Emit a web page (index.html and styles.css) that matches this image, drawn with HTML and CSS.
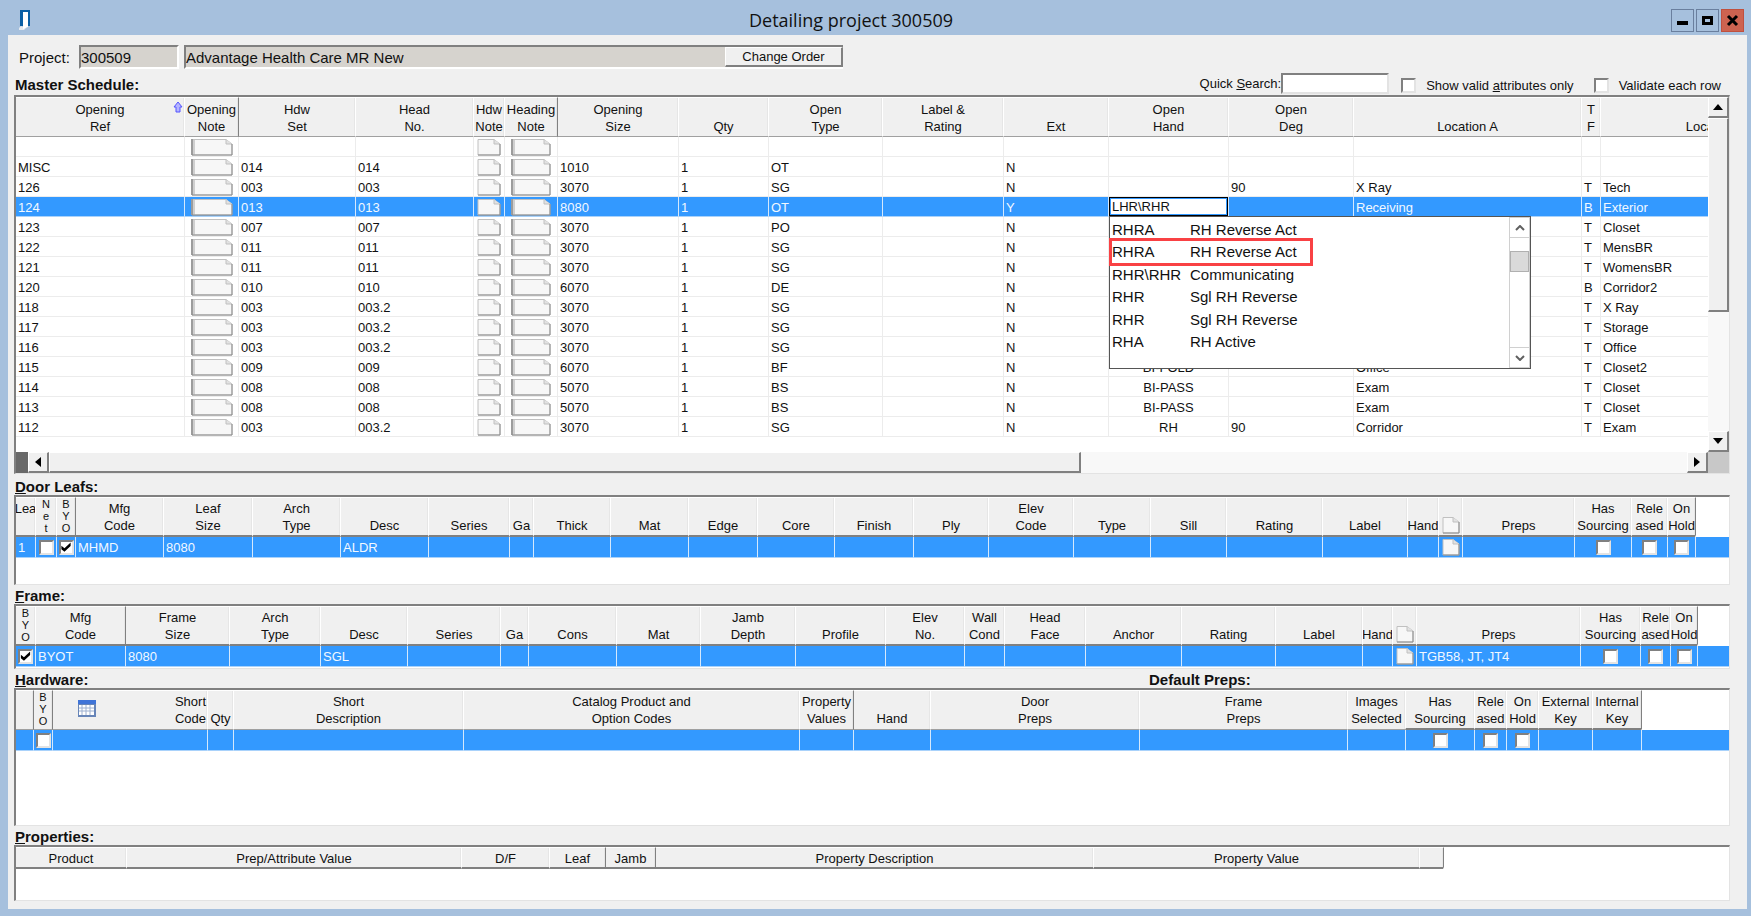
FILE: index.html
```html
<!DOCTYPE html>
<html lang="en">
<head>
  <meta charset="UTF-8">
  <title>Detailing project 300509</title>
  <link rel="stylesheet" href="styles.css">
</head>
<body>
  <header class="titlebar">
    <svg class="app-icon" width="12" height="20" viewBox="0 0 12 20">
      <path d="M2 16 L7 18 L5 20 L0 20 L0 18 Z" fill="#e4e9ef"/>
      <rect x="1" y="0" width="10" height="16" fill="#0a5fa5"/>
      <path d="M4 2 H9 V17 L4 19 Z" fill="#ffffff"/>
    </svg>
    <h1>Detailing project 300509</h1>
    <div class="window-buttons">
      <button type="button" aria-label="Minimize"><svg width="13" height="13" viewBox="0 0 13 13"><rect x="1" y="7" width="11" height="4"/></svg></button>
      <button type="button" aria-label="Maximize"><svg width="13" height="13" viewBox="0 0 13 13"><path d="M1 2 H12 V11 H1 Z M4 5 V8 H9 V5 Z" fill-rule="evenodd"/></svg></button>
      <button type="button" class="close" aria-label="Close"><svg width="13" height="13" viewBox="0 0 13 13"><path d="M2 2 L11 11 M11 2 L2 11" stroke="#000" stroke-width="3"/></svg></button>
    </div>
  </header>

  <main class="content">
    <div class="project-row">
      <label for="project-no">Project:</label>
      <input type="text" class="field project-no" id="project-no" value="300509" readonly>
      <div class="field project-name">
        <input type="text" value="Advantage Health Care MR New" aria-label="Project name" readonly>
        <button type="button" class="raised">Change Order</button>
      </div>
    </div>

    <div class="schedule-head">
      <h2>Master Schedule:</h2>
      <div class="search">
        <label for="quick-search">Quick <u>S</u>earch:</label>
        <input type="text" id="quick-search">
      </div>
      <label class="option"><input type="checkbox"> <span>Show valid <u>a</u>ttributes only</span></label>
      <label class="option"><input type="checkbox"> <span>Validate each row</span></label>
    </div>

    <section class="box master">
      <div class="pane"><table id="master"></table></div>
      <div class="vscroll">
        <button type="button" class="raised" aria-label="Scroll up"><svg width="10" height="6" viewBox="0 0 10 6"><path d="M5 0 L10 6 H0 Z"/></svg></button>
        <div class="track"><div class="thumb raised"></div></div>
        <button type="button" class="raised" aria-label="Scroll down"><svg width="10" height="6" viewBox="0 0 10 6"><path d="M0 0 H10 L5 6 Z"/></svg></button>
      </div>
      <div class="hscroll">
        <div class="split-box"></div>
        <button type="button" class="raised" aria-label="Scroll left"><svg width="6" height="10" viewBox="0 0 6 10"><path d="M6 0 V10 L0 5 Z"/></svg></button>
        <div class="track"><div class="thumb raised"></div></div>
        <button type="button" class="raised" aria-label="Scroll right"><svg width="6" height="10" viewBox="0 0 6 10"><path d="M0 0 V10 L6 5 Z"/></svg></button>
      </div>
      <div class="corner"></div>
    </section>

    <h2 class="leafs-title"><u>D</u>oor Leafs:</h2>
    <section class="box leafs"><table id="leafs" class="thick"></table></section>

    <h2><u>F</u>rame:</h2>
    <section class="box frame"><table id="frame" class="thick"></table></section>

    <div class="hardware-head">
      <h2><u>H</u>ardware:</h2>
      <h2>Default Preps:</h2>
    </div>
    <section class="box hardware"><table id="hardware"></table></section>

    <h2><u>P</u>roperties:</h2>
    <section class="box properties"><table id="properties" class="thick short"></table></section>
  </main>
  <script src="grids.js"></script>
</body>
</html>
```
FILE: styles.css
```css
*, *::before, *::after {
  box-sizing: border-box;
}
body {
  margin: 0;
  min-height: 100vh;
  display: flex;
  flex-direction: column;
  background: #a6c0dd;
  color: #111;
  font-family: "Liberation Sans", Arial, sans-serif;
  font-size: 13px;
  line-height: 17px;
}
button, input {
  font: inherit;
  color: inherit;
  margin: 0;
  padding: 0;
  border-radius: 0;
}
h1, h2 {
  margin: 0;
}

/* title bar */
.titlebar {
  display: flex;
  align-items: center;
  height: 35px;
  padding: 5px 7px 0 19px;
}
.titlebar h1 {
  flex: 1;
  text-align: center;
  font-family: "Open Sans", "Noto Sans", sans-serif;
  font-size: 18px;
  font-weight: 400;
  line-height: 24px;
}
.window-buttons {
  display: flex;
  gap: 2px;
}
.window-buttons button {
  display: flex;
  align-items: center;
  justify-content: center;
  width: 23px;
  height: 23px;
  background: #a6c0dd;
  border: 1px solid #6a7f9e;
}
.window-buttons .close {
  background: #cd6350;
  border-color: #c0503e;
}

.content {
  flex: 1;
  display: flex;
  flex-direction: column;
  margin: 0 4px 7px 8px;
  padding: 10px 17px 8px 6px;
  background: #f0f0f0;
}
h2 {
  padding: 2px 0 0 1px;
  font-size: 15px;
  font-weight: bold;
  line-height: 17px;
}

/* project line */
.project-row {
  display: flex;
  align-items: center;
  height: 24px;
  font-size: 15px;
}
.project-row label {
  width: 65px;
  padding-left: 5px;
}
.field {
  height: 24px;
  background: #d6d3ce;
  border: 2px solid #808080;
  border-right-color: #fff;
  border-bottom-color: #fff;
}
.project-no {
  width: 100px;
  margin-right: 5px;
}
.project-name {
  display: flex;
  width: 659px;
  border-right: 0;
}
.project-name input {
  flex: 1;
  min-width: 0;
  border: 0;
  background: transparent;
}
.project-name button {
  width: 118px;
  font-size: 13px;
}
.raised {
  background: #f0f0f0;
  border: 1px solid #fff;
  border-right: 2px solid #808080;
  border-bottom: 2px solid #808080;
}

/* schedule heading */
.schedule-head {
  display: flex;
  align-items: center;
  height: 26px;
  padding: 3px 9px 0 0;
}
.search {
  display: flex;
  align-items: center;
  margin-left: auto;
}
.search input {
  width: 108px;
  height: 21px;
  background: #fff;
  border: 2px solid #808080;
  border-right-color: #e3e3e3;
  border-bottom-color: #e3e3e3;
}
.option {
  display: flex;
  align-items: center;
  gap: 10px;
  padding-top: 3px;
}
.search + .option {
  margin: 0 20px 0 12px;
}
input[type="checkbox"] {
  appearance: none;
  width: 15px;
  height: 15px;
  background: #fff;
  border: 2px solid #808080;
  border-right-color: #e3e3e3;
  border-bottom-color: #e3e3e3;
}
input[type="checkbox"]:checked::before {
  content: "";
  display: block;
  width: 11px;
  height: 11px;
  background: #000;
  clip-path: polygon(8% 38%, 36% 62%, 92% 8%, 92% 42%, 36% 94%, 8% 70%);
}

/* grids */
.box {
  background: #fff;
  border: 2px solid #808080;
  border-right: 1px solid #e3e3e3;
  border-bottom: 1px solid #e3e3e3;
  overflow: hidden;
}
.master {
  display: grid;
  grid-template-columns: 1fr 21px;
  grid-template-rows: 1fr 21px;
}
.pane {
  min-width: 0;
  padding-bottom: 15px;
  overflow: hidden;
}
.leafs-title {
  margin-top: 2px;
}
.leafs {
  min-height: 90px;
}
.frame {
  min-height: 65px;
}
.hardware {
  flex: 1;
  min-height: 80px;
}
.properties {
  min-height: 56px;
}
.hardware-head {
  display: grid;
  grid-template-columns: 1134px 1fr;
}
table {
  width: 100%;
  table-layout: fixed;
  border-collapse: separate;
  border-spacing: 0;
}
th {
  height: 40px;
  padding: 0;
  position: relative;
  overflow: hidden;
  vertical-align: top;
  background: #f0f0f0;
  border-left: 1px solid #fff;
  border-top: 1px solid #fff;
  border-bottom: 1px solid #a0a0a0;
  box-shadow: inset -1px 0 #e6e6e6;
  font-weight: 400;
}
.thick th, th.thick {
  border-bottom: 2px solid #808080;
}
th.split {
  border-left-color: #808080;
}
.short th {
  height: 22px;
}
th.filler {
  background: #fff;
  border-left: 1px solid #808080;
  border-bottom-color: #fff;
  box-shadow: none;
}
.head {
  display: flex;
  flex-direction: column;
  align-items: center;
  justify-content: flex-end;
  height: 36px;
  white-space: nowrap;
}
#master .head {
  height: 37px;
}
.short .head {
  height: 19px;
}
.head.letters {
  font-size: 11px;
  line-height: 12px;
}
.head.right {
  align-items: flex-end;
  padding-right: 1px;
}
.sort {
  position: absolute;
  top: 3px;
  right: 1px;
}
.table-icon {
  position: absolute;
  top: 9px;
  left: 25px;
}
td {
  height: 20px;
  padding: 0 0 0 2px;
  border-left: 1px solid #ececec;
  border-bottom: 1px solid #ececec;
  line-height: 17px;
  white-space: nowrap;
}
#master td {
  padding-top: 2px;
}
td:first-child, th:first-child {
  border-left: 0;
}
.selected td {
  background: #3399ff;
  color: #f2f8ff;
  border-left-color: #d5e8fc;
  border-bottom-color: #a9d2fb;
}
.leafs td, .frame td, .hardware td {
  height: 21px;
}
td.center {
  padding-left: 0;
  text-align: center;
}
td input, td svg {
  display: block;
  margin: 0 auto;
}
.note {
  display: block;
}

/* open hand drop-down */
#master td.combo-cell {
  padding: 0;
  background: #fff;
}
.combo {
  position: relative;
  color: #111;
}
.combo input {
  width: 100%;
  height: 19px;
  padding-left: 2px;
  background: #fff;
  border: 1px solid #000;
  outline: 1px solid #3399ff;
  outline-offset: -2px;
}
.dropdown {
  position: absolute;
  z-index: 1;
  top: 19px;
  left: 0;
  display: flex;
  width: 422px;
  height: 153px;
  background: #fff;
  border: 1px solid #555;
}
.dropdown ul {
  flex: 1;
  display: grid;
  grid-template-rows: repeat(6, 1fr);
  margin: 0;
  padding: 1px 0 15px;
  list-style: none;
  font-size: 15px;
}
.dropdown li {
  display: grid;
  grid-template-columns: 78px 1fr;
  align-items: center;
  padding-left: 2px;
}
.marked {
  position: relative;
}
.marked::after {
  content: "";
  position: absolute;
  top: -3px;
  bottom: -3px;
  left: -1px;
  width: 204px;
  border: 3px solid #f94144;
}
.list-scroll {
  display: flex;
  flex-direction: column;
  width: 21px;
  border: 1px solid #d0d0d0;
}
.list-scroll button {
  display: flex;
  align-items: center;
  justify-content: center;
  height: 20px;
  background: #fff;
  border: 0;
  border-bottom: 1px solid #d0d0d0;
}
.list-scroll button:last-child {
  border-top: 1px solid #d0d0d0;
  border-bottom: 0;
}
.list-track {
  flex: 1;
  padding-top: 13px;
}
.list-thumb {
  height: 21px;
  background: #dadada;
  border: 1px solid #b0b0b0;
}

/* scroll bars */
.vscroll, .hscroll {
  display: flex;
}
.vscroll {
  flex-direction: column;
}
.vscroll button, .hscroll button {
  display: flex;
  align-items: center;
  justify-content: center;
  flex: 0 0 21px;
}
.track {
  flex: 1;
  background: #f8f8f8;
}
.vscroll .thumb {
  height: 62%;
}
.hscroll .thumb {
  width: 63%;
  height: 100%;
}
.split-box {
  width: 12px;
  background: #696969;
}
.corner {
  background: #c8c8c8;
}
```
FILE: grids.js
```js
// page icon with a folded corner, used by all the note columns
function note(w) {
  var r = w - 1;
  // the wide icons have a shaded left edge
  var edge = w > 30 ? '<rect x="0" y="0" width="2" height="16" fill="#9c9c9c"/><rect x="2" y="1" width="2" height="15" fill="#cfcfcf"/>' : '';
  return '<svg class="note" width="' + w + '" height="17" viewBox="0 0 ' + w + ' 17">' +
    '<path d="M1 0.5 H' + (r - 6) + ' L' + r + ' 5 V16 H1 Z" fill="#f7f7f7" stroke="#c0c0c0"/>' + edge +
    '<path d="M' + (r - 6) + ' 0.5 V5 H' + r + '" fill="#e2e2e2" stroke="#c0c0c0"/>' +
    '<path d="M1 16 H' + r + ' V5" fill="none" stroke="#8c8c8c"/></svg>';
}

var sortIcon = '<svg class="sort" width="10" height="13" viewBox="0 0 10 13">' +
  '<path d="M5 1 L9 6 H7 V11 H3 V6 H1 Z" fill="#b4b4ff" stroke="#5555ff"/></svg>';

var tableIcon = '<svg class="table-icon" width="18" height="17" viewBox="0 0 18 17">' +
  '<rect x="0" y="0" width="18" height="17" fill="#6785b8"/><rect x="0" y="0" width="18" height="4" fill="#3f74d8"/>' +
  '<rect x="1" y="5" width="15" height="10" fill="#fff"/>' +
  '<path d="M4 5 V15 M8 5 V15 M12 5 V15 M1 8 H16 M1 11 H16" stroke="#9db0d0"/></svg>';

// columns: [heading, width, options]
var grids = {
  master: {
    cols: [['Opening|Ref', 168, 'sorted'], ['Opening|Note', 54, 'note42'], ['Hdw|Set', 117, 'split'], ['Head|No.', 118],
      ['Hdw|Note', 31, 'note24'], ['Heading|Note', 53, 'note40'], ['Opening|Size', 121, 'split'], ['Qty', 90],
      ['Open|Type', 114], ['Label &amp;|Rating', 121], ['Ext', 105], ['Open|Hand', 120, 'center'], ['Open|Deg', 125],
      ['Location A', 228], ['T|F', 19], ['Location B', 232]],
    selected: 3,
    rows: [
      [],
      ['MISC', , '014', '014', , , '1010', '1', 'OT', , 'N'],
      ['126', , '003', '003', , , '3070', '1', 'SG', , 'N', , '90', 'X Ray', 'T', 'Tech'],
      ['124', , '013', '013', , , '8080', '1', 'OT', , 'Y', 'COMBO', , 'Receiving', 'B', 'Exterior'],
      ['123', , '007', '007', , , '3070', '1', 'PO', , 'N', , , , 'T', 'Closet'],
      ['122', , '011', '011', , , '3070', '1', 'SG', , 'N', , , , 'T', 'MensBR'],
      ['121', , '011', '011', , , '3070', '1', 'SG', , 'N', , , , 'T', 'WomensBR'],
      ['120', , '010', '010', , , '6070', '1', 'DE', , 'N', , , , 'B', 'Corridor2'],
      ['118', , '003', '003.2', , , '3070', '1', 'SG', , 'N', , , , 'T', 'X Ray'],
      ['117', , '003', '003.2', , , '3070', '1', 'SG', , 'N', , , , 'T', 'Storage'],
      ['116', , '003', '003.2', , , '3070', '1', 'SG', , 'N', , , , 'T', 'Office'],
      ['115', , '009', '009', , , '6070', '1', 'BF', , 'N', 'BI-FOLD', , 'Office', 'T', 'Closet2'],
      ['114', , '008', '008', , , '5070', '1', 'BS', , 'N', 'BI-PASS', , 'Exam', 'T', 'Closet'],
      ['113', , '008', '008', , , '5070', '1', 'BS', , 'N', 'BI-PASS', , 'Exam', 'T', 'Closet'],
      ['112', , '003', '003.2', , , '3070', '1', 'SG', , 'N', 'RH', '90', 'Corridor', 'T', 'Exam']
    ]
  },
  leafs: {
    filler: true,
    cols: [['Lea|&nbsp;', 19], ['N|e|t', 21, 'check letters'], ['B|Y|O', 19, 'checked letters'], ['Mfg|Code', 88, 'split'],
      ['Leaf|Size', 89], ['Arch|Type', 88], ['Desc', 88], ['Series', 81], ['Ga', 24], ['Thick', 77], ['Mat', 78],
      ['Edge', 69], ['Core', 77], ['Finish', 79], ['Ply', 75], ['Elev|Code', 85], ['Type', 77], ['Sill', 76],
      ['Rating', 96], ['Label', 85], ['Hand', 31], ['NOTE', 24, 'note18'], ['Preps', 112],
      ['Has|Sourcing', 57, 'check'], ['Rele|ased', 36, 'check'], ['On|Hold', 28, 'check']],
    selected: 0,
    rows: [['1', , , 'MHMD', '8080', , 'ALDR']]
  },
  frame: {
    filler: true,
    cols: [['B|Y|O', 19, 'checked letters'], ['Mfg|Code', 90], ['Frame|Size', 104, 'split'], ['Arch|Type', 91], ['Desc', 87],
      ['Series', 93], ['Ga', 28], ['Cons', 88], ['Mat', 84], ['Jamb|Depth', 95], ['Profile', 90], ['Elev|No.', 79],
      ['Wall|Cond', 40], ['Head|Face', 81], ['Anchor', 96], ['Rating', 94], ['Label', 87], ['Hand', 30],
      ['NOTE', 24, 'note18'], ['Preps', 164], ['Has|Sourcing', 60, 'check'], ['Rele|ased', 30, 'check'], ['On|Hold', 27, 'check']],
    selected: 0,
    rows: [[, 'BYOT', '8080', , 'SGL', , , , , , , , , , , , , , , 'TGB58, JT, JT4']]
  },
  hardware: {
    filler: true,
    cols: [['', 17], ['B|Y|O', 19, 'check split letters'], ['Short|Code', 155, 'split right'], ['Qty', 26], ['Short|Description', 230],
      ['Catalog Product and|Option Codes', 336], ['Property|Values', 54], ['Hand', 77, 'split'], ['Door|Preps', 209],
      ['Frame|Preps', 208], ['Images|Selected', 58], ['Has|Sourcing', 69, 'check thick'], ['Rele|ased', 32, 'check thick'],
      ['On|Hold', 32, 'check thick'], ['External|Key', 54, 'thick'], ['Internal|Key', 49, 'thick']],
    selected: 0,
    rows: [[]]
  },
  properties: {
    filler: true,
    cols: [['Product', 110], ['Prep/Attribute Value', 335], ['D/F', 88], ['Leaf', 56], ['Jamb', 50, 'split'],
      ['Property Description', 438, 'split'], ['Property Value', 326], ['', 24]],
    rows: []
  }
};

var hands = [['RHRA', 'RH Reverse Act'], ['RHRA', 'RH Reverse Act'], ['RHR\\RHR', 'Communicating'],
  ['RHR', 'Sgl RH Reverse'], ['RHR', 'Sgl RH Reverse'], ['RHA', 'RH Active']];

function combo() {
  var items = hands.map(function (h, i) {
    return '<li role="option"' + (i === 1 ? ' class="marked"' : '') + '><span>' + h[0] + '</span><span>' + h[1] + '</span></li>';
  }).join('');
  return '<div class="combo"><input type="text" role="combobox" aria-label="Open Hand" aria-expanded="true" aria-controls="hand-list" value="LHR\\RHR">' +
    '<div class="dropdown"><ul role="listbox" id="hand-list">' + items + '</ul>' +
    '<div class="list-scroll"><button type="button" aria-label="List up"><svg width="10" height="6" viewBox="0 0 10 6"><path d="M1 5 L5 1 L9 5" fill="none" stroke="#606060" stroke-width="2"/></svg></button>' +
    '<div class="list-track"><div class="list-thumb"></div></div>' +
    '<button type="button" aria-label="List down"><svg width="10" height="6" viewBox="0 0 10 6"><path d="M1 1 L5 5 L9 1" fill="none" stroke="#606060" stroke-width="2"/></svg></button></div></div></div>';
}

function headCell(col) {
  var opt = col[2] || '';
  var cls = (opt.match(/split|thick/g) || []).join(' ');
  var inner = (opt.match(/letters|right/g) || []).join(' ');
  var lines = col[0] === 'NOTE' ? note(18) : col[0].split('|').map(function (t) {
    return '<span>' + t + '</span>';
  }).join('');
  var extra = /sorted/.test(opt) ? sortIcon : /right/.test(opt) ? tableIcon : '';
  return '<th class="' + cls + '"><div class="head ' + inner + '">' + lines + '</div>' + extra + '</th>';
}

function bodyCell(col, value) {
  var opt = col[2] || '';
  var noteWidth = opt.match(/note(\d+)/);
  if (value === 'COMBO') return '<td class="combo-cell">' + combo() + '</td>';
  if (noteWidth) return '<td class="center">' + note(+noteWidth[1]) + '</td>';
  if (/check/.test(opt)) {
    return '<td class="center"><input type="checkbox" aria-label="' + col[0].replace(/\|/g, ' ') + '"' +
      (/checked/.test(opt) ? ' checked' : '') + '></td>';
  }
  return '<td' + (/center/.test(opt) ? ' class="center"' : '') + '>' + (value || '') + '</td>';
}

Object.keys(grids).forEach(function (id) {
  var g = grids[id];
  var html = '<colgroup>' + g.cols.map(function (c) {
    return '<col style="width:' + c[1] + 'px">';
  }).join('') + (g.filler ? '<col>' : '') + '</colgroup>';
  html += '<thead><tr>' + g.cols.map(headCell).join('') + (g.filler ? '<th class="filler"></th>' : '') + '</tr></thead><tbody>';
  g.rows.forEach(function (row, i) {
    html += '<tr' + (i === g.selected ? ' class="selected"' : '') + '>' + g.cols.map(function (c, n) {
      return bodyCell(c, row[n]);
    }).join('') + (g.filler ? '<td class="filler"></td>' : '') + '</tr>';
  });
  document.getElementById(id).innerHTML = html + '</tbody>';
});
```
